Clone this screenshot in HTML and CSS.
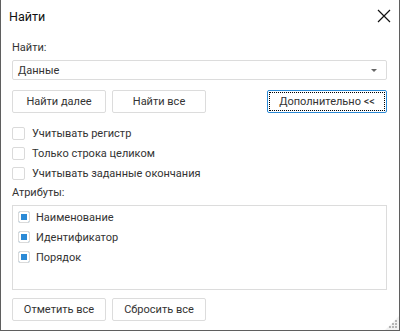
FILE: index.html
```html
<!DOCTYPE html>
<html lang="ru">
<head>
  <meta charset="UTF-8" />
  <title>Найти</title>
  <link rel="stylesheet" href="styles.css">
</head>
<body>
  <div class="dialog">
    <div class="titlebar">
      <span class="title">Найти</span>
      <svg class="close" width="14" height="14" viewBox="0 0 14 14">
        <path d="M1 1 L13 13 M13 1 L1 13" stroke="#111" stroke-width="1.2" fill="none"/>
      </svg>
    </div>

    <div class="content">
      <label class="label">Найти:</label>
      <div class="combo">
        <span>Данные</span>
        <span class="arrow"></span>
      </div>

      <div class="buttons">
        <button class="btn">Найти далее</button>
        <button class="btn">Найти все</button>
        <button class="btn btn-focus"><span>Дополнительно &lt;&lt;</span></button>
      </div>

      <div class="options">
        <label class="check"><span class="box"></span>Учитывать регистр</label>
        <label class="check"><span class="box"></span>Только строка целиком</label>
        <label class="check"><span class="box"></span>Учитывать заданные окончания</label>
      </div>

      <label class="label attr">Атрибуты:</label>
      <div class="list">
        <div class="item"><span class="box on"></span>Наименование</div>
        <div class="item"><span class="box on"></span>Идентификатор</div>
        <div class="item"><span class="box on"></span>Порядок</div>
      </div>

      <div class="buttons bottom">
        <button class="btn">Отметить все</button>
        <button class="btn">Сбросить все</button>
      </div>
    </div>

    <svg class="grip" width="14" height="14" viewBox="0 0 14 14">
      <path d="M14 0 L14 14 L0 14 Z" fill="#f1f1f1"/>
      <rect x="10" y="4" width="2" height="2" fill="#b5b5b5"/>
      <rect x="7" y="7" width="2" height="2" fill="#b5b5b5"/>
      <rect x="10" y="7" width="2" height="2" fill="#b5b5b5"/>
      <rect x="4" y="10" width="2" height="2" fill="#b5b5b5"/>
      <rect x="7" y="10" width="2" height="2" fill="#b5b5b5"/>
      <rect x="10" y="10" width="2" height="2" fill="#b5b5b5"/>
    </svg>
  </div>
</body>
</html>
```

FILE: styles.css
```css
body {
  margin: 0;
  font-family: Roboto, 'Noto Sans', sans-serif;
  font-size: 11px;
  color: #333;
  background: #fff;
}
.dialog {
  position: relative;
  box-sizing: border-box;
  width: 400px;
  height: 331px;
  border: 1px solid #5f5f5f;
  border-top: none;
  background: #fff;
}
.titlebar {
  display: flex;
  align-items: center;
  justify-content: space-between;
  height: 32px;
  padding: 0 8px 0 8px;
}
.title {
  font-size: 12.5px;
  color: #111;
}
.content {
  padding: 8px 12px 0 11px;
}
.label {
  display: block;
  line-height: 16px;
  margin-bottom: 4px;
}
.combo {
  display: flex;
  align-items: center;
  justify-content: space-between;
  height: 18px;
  border: 1px solid #dcdcdc;
  border-radius: 2px;
  padding: 0 9px 0 5px;
}
.arrow {
  width: 0;
  height: 0;
  border-left: 3px solid transparent;
  border-right: 3px solid transparent;
  border-top: 3px solid #666;
}
.buttons {
  display: flex;
  gap: 6px;
  margin-top: 10px;
}
.btn {
  font: inherit;
  color: #333;
  width: 94px;
  height: 23px;
  background: #fff;
  border: 1px solid #dcdcdc;
  border-radius: 2px;
  padding: 0;
}
.btn-focus {
  margin-left: auto;
  width: 120px;
  border-color: #2b8ad6;
  padding: 1px;
}
.btn-focus span {
  display: block;
  height: 17px;
  line-height: 17px;
  border: 1px dotted #000;
}
.options {
  margin-top: 10px;
}
.check {
  display: flex;
  align-items: center;
  height: 20px;
}
.box {
  box-sizing: border-box;
  width: 13px;
  height: 13px;
  border: 1px solid #dadada;
  border-radius: 2px;
  margin-right: 7px;
  background: #fff;
  flex-shrink: 0;
}
.box.on {
  width: 12px;
  height: 12px;
  background: #2b8ad6;
  box-shadow: inset 0 0 0 2px #fff;
  margin-right: 6px;
}
.attr {
  margin-top: 2px;
}
.list {
  box-sizing: border-box;
  height: 85px;
  border: 1px solid #dcdcdc;
  padding: 1px 5px;
}
.item {
  display: flex;
  align-items: center;
  height: 20px;
}
.bottom {
  margin-top: 8px;
}
.grip {
  position: absolute;
  right: 0;
  bottom: 0;
}
```
